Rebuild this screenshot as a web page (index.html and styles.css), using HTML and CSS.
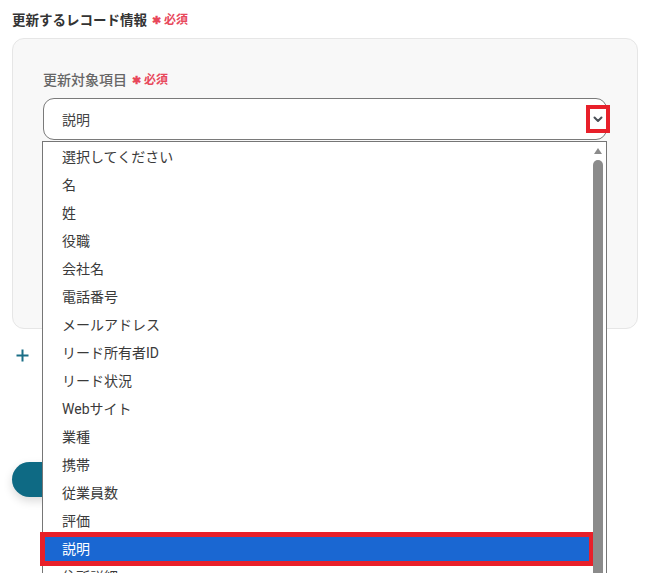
FILE: index.html
```html
<!DOCTYPE html>
<html lang="ja">
<head>
<meta charset="utf-8">
<title>更新するレコード情報</title>
<link rel="stylesheet" href="styles.css">
</head>
<body>
<div class="page">
  <div class="title">更新するレコード情報<span class="req"><span class="star">✱</span>必須</span></div>
  <div class="card">
    <div class="label">更新対象項目<span class="req"><span class="star">✱</span>必須</span></div>
    <div class="select">
      <span class="value">説明</span>
      <span class="chev-box">
        <svg width="10" height="7" viewBox="0 0 10 7"><path d="M1.5 1.5 L5 5 L8.5 1.5" fill="none" stroke="#4a4f57" stroke-width="2" stroke-linecap="round" stroke-linejoin="round"/></svg>
      </span>
      <div class="dropdown">
        <ul class="options">
          <li>選択してください</li>
          <li>名</li>
          <li>姓</li>
          <li>役職</li>
          <li>会社名</li>
          <li>電話番号</li>
          <li>メールアドレス</li>
          <li>リード所有者ID</li>
          <li>リード状況</li>
          <li>Webサイト</li>
          <li>業種</li>
          <li>携帯</li>
          <li>従業員数</li>
          <li>評価</li>
          <li class="selected">説明</li>
          <li>住所詳細</li>
        </ul>
        <div class="scrollbar">
          <div class="arrow"></div>
          <div class="thumb"></div>
        </div>
      </div>
    </div>
  </div>
  <div class="add">
    <svg width="13" height="13" viewBox="0 0 13 13"><path d="M6.5 0.5 V12.5 M0.5 6.5 H12.5" stroke="#1a6e86" stroke-width="2"/></svg>
  </div>
  <div class="button"></div>
</div>
</body>
</html>
```

FILE: styles.css
```css
* { box-sizing: border-box; }
html, body { margin: 0; background: #fff; }
body {
  font-family: Roboto, "Noto Sans CJK JP", sans-serif;
  color: #333;
  overflow: hidden;
  height: 573px;
}
.page { padding: 10px 21px 0 12px; }
.title {
  font-size: 13.5px;
  font-weight: 700;
  line-height: 20px;
  color: #333;
  display: flex;
  align-items: center;
}
.req {
  color: #e8475a;
  font-size: 12px;
  font-weight: 700;
  margin-left: 5px;
  display: inline-flex;
  align-items: center;
}
.star { font-size: 11px; margin-right: 3px; position: relative; top: 1px; }
.card {
  margin-top: 8px;
  width: 626px;
  height: 291px;
  border: 1px solid #e6e6e6;
  border-radius: 12px;
  background: #f8f8f8;
  padding: 31px 30px 0 30px;
}
.label {
  font-size: 14px;
  line-height: 20px;
  color: #666;
  font-weight: 500;
  display: flex;
  align-items: center;
}
.select {
  position: relative;
  margin-top: 8px;
  height: 42px;
  border: 1px solid #7a7a7a;
  border-radius: 11px;
  background: #fff;
  display: flex;
  align-items: center;
  padding-left: 18px;
}
.value { font-size: 14px; color: #444; }
.chev-box {
  position: absolute;
  right: -4px;
  top: 6px;
  width: 24px;
  height: 28px;
  border: 4px solid #e8202a;
  background: #fff;
  display: flex;
  align-items: center;
  justify-content: center;
}
.chev-box svg { display: block; }
.dropdown {
  position: absolute;
  left: -2px;
  top: 42px;
  width: 565px;
  height: 440px;
  border: 1px solid #767676;
  background: #fff;
  display: flex;
  z-index: 2;
}
.options {
  list-style: none;
  margin: 0;
  padding: 1px 0 0 0;
  flex: 1;
}
.options li {
  height: 28px;
  line-height: 28px;
  padding-left: 19px;
  font-size: 14px;
  color: #3a3a3a;
  white-space: nowrap;
}
.options li.selected {
  position: relative;
  background: #1a67d2;
  color: #fff;
}
.options li.selected::after {
  content: "";
  position: absolute;
  left: -3px;
  right: 0;
  top: -3px;
  bottom: -3px;
  border: 5px solid #e8202a;
  border-right-width: 4px;
}
.scrollbar {
  width: 10px;
  margin-right: 3px;
  display: flex;
  flex-direction: column;
  align-items: center;
}
.arrow {
  margin-top: 6px;
  width: 0;
  height: 0;
  border-left: 4.5px solid transparent;
  border-right: 4.5px solid transparent;
  border-bottom: 6px solid #8b8b8b;
}
.thumb {
  margin-top: 6px;
  width: 10px;
  flex: 1;
  background: #8b8b8b;
  border-radius: 5px 5px 0 0;
}
.add {
  margin-top: 20px;
  margin-left: 4px;
  height: 13px;
}
.add svg { display: block; }
.button {
  margin-top: 100px;
  width: 200px;
  height: 35px;
  border-radius: 18px;
  background: #0e6a84;
  box-shadow: 0 4px 10px rgba(0, 0, 0, 0.15);
}
```
